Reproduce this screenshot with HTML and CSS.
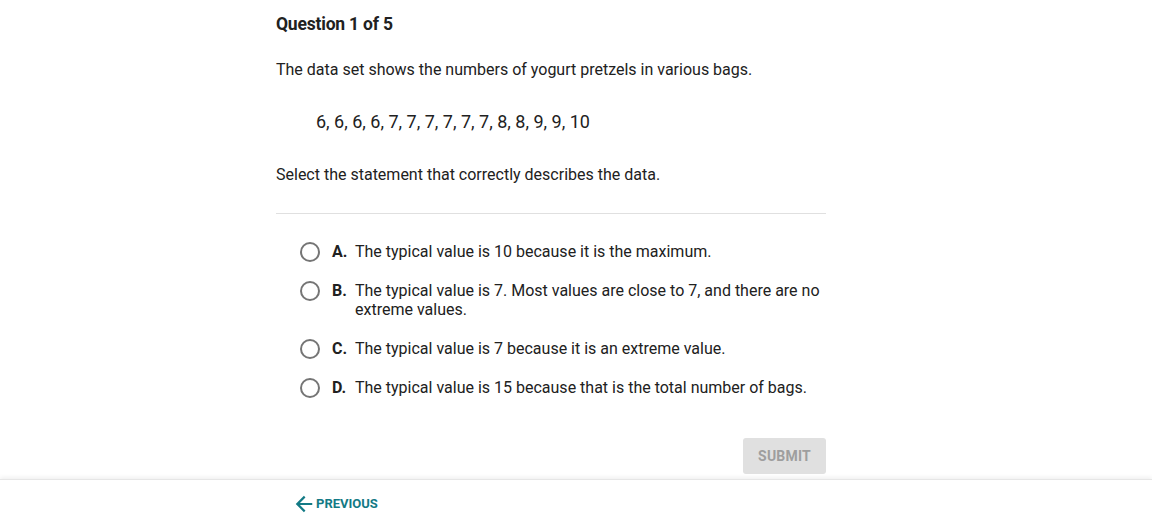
FILE: index.html
```html
<!DOCTYPE html>
<html>
<head>
<meta charset="utf-8">
<link rel="stylesheet" href="styles.css">
</head>
<body>
<div class="page">
  <main class="question">
    <h1 class="title">Question 1 of 5</h1>
    <p class="prompt">The data set shows the numbers of yogurt pretzels in various bags.</p>
    <p class="dataset">6, 6, 6, 6, 7, 7, 7, 7, 7, 7, 8, 8, 9, 9, 10</p>
    <p class="prompt select">Select the statement that correctly describes the data.</p>
    <hr class="divider">
    <ul class="options">
      <li class="option"><span class="radio"></span><span class="letter">A.</span><span class="text">The typical value is 10 because it is the maximum.</span></li>
      <li class="option"><span class="radio"></span><span class="letter">B.</span><span class="text">The typical value is 7. Most values are close to 7, and there are no extreme values.</span></li>
      <li class="option"><span class="radio"></span><span class="letter">C.</span><span class="text">The typical value is 7 because it is an extreme value.</span></li>
      <li class="option"><span class="radio"></span><span class="letter">D.</span><span class="text">The typical value is 15 because that is the total number of bags.</span></li>
    </ul>
    <div class="actions"><button class="submit">SUBMIT</button></div>
  </main>
  <footer class="footer">
    <a class="prev"><svg width="22" height="22" viewBox="0 0 24 24"><path d="M21 10.8H7.6l6-6L11.9 3.1 3 12l8.9 8.9 1.7-1.7-6-6H21z" fill="#137a85"/></svg><span>PREVIOUS</span></a>
  </footer>
</div>
</body>
</html>
```
FILE: styles.css
```css
* { box-sizing: border-box; }
html, body { margin: 0; padding: 0; background: #fff; }
body { font-family: Roboto, "Liberation Sans", sans-serif; color: #212121; }
.page { width: 1152px; height: 527px; display: flex; flex-direction: column; overflow: hidden; }
.question { margin-left: 276px; width: 550px; padding-top: 12px; flex: 1; }
.title { font-size: 17.5px; font-weight: 700; line-height: 24px; margin: 0; color: #212121; letter-spacing: -0.2px; }
.prompt { font-size: 16px; line-height: 22px; margin: 23px 0 0; }
.dataset { font-size: 18px; line-height: 24px; margin: 29px 0 0 40px; }
.select { margin-top: 30px; }
.divider { border: 0; border-top: 1px solid #e0e0e0; margin: 27px 0 0; height: 0; }
.options { list-style: none; margin: 28px 0 0; padding: 0 0 0 24px; display: flex; flex-direction: column; gap: 20px; }
.option { display: flex; align-items: flex-start; font-size: 16px; line-height: 19px; }
.radio { width: 20px; height: 20px; border: 2px solid #757575; border-radius: 50%; flex: none; margin: 0 0 -1px; }
.letter { font-weight: 700; margin-left: 12px; width: 23px; flex: none; }
.text { flex: 1; }
.actions { display: flex; justify-content: flex-end; margin-top: 41px; }
.submit { background: #e0e0e0; color: #9e9e9e; border: 0; border-radius: 3px; font-family: Roboto, "Liberation Sans", sans-serif; font-weight: 700; font-size: 14px; width: 83px; height: 36px; letter-spacing: 0.2px; }
.footer { height: 48px; border-top: 1px solid #e6e6e6; box-shadow: 0 -2px 4px rgba(0,0,0,0.06); padding-left: 293px; display: flex; align-items: center; }
.prev { display: flex; align-items: center; gap: 1px; color: #137a85; font-weight: 700; font-size: 13px; }
.prev svg { display: block; }
```
